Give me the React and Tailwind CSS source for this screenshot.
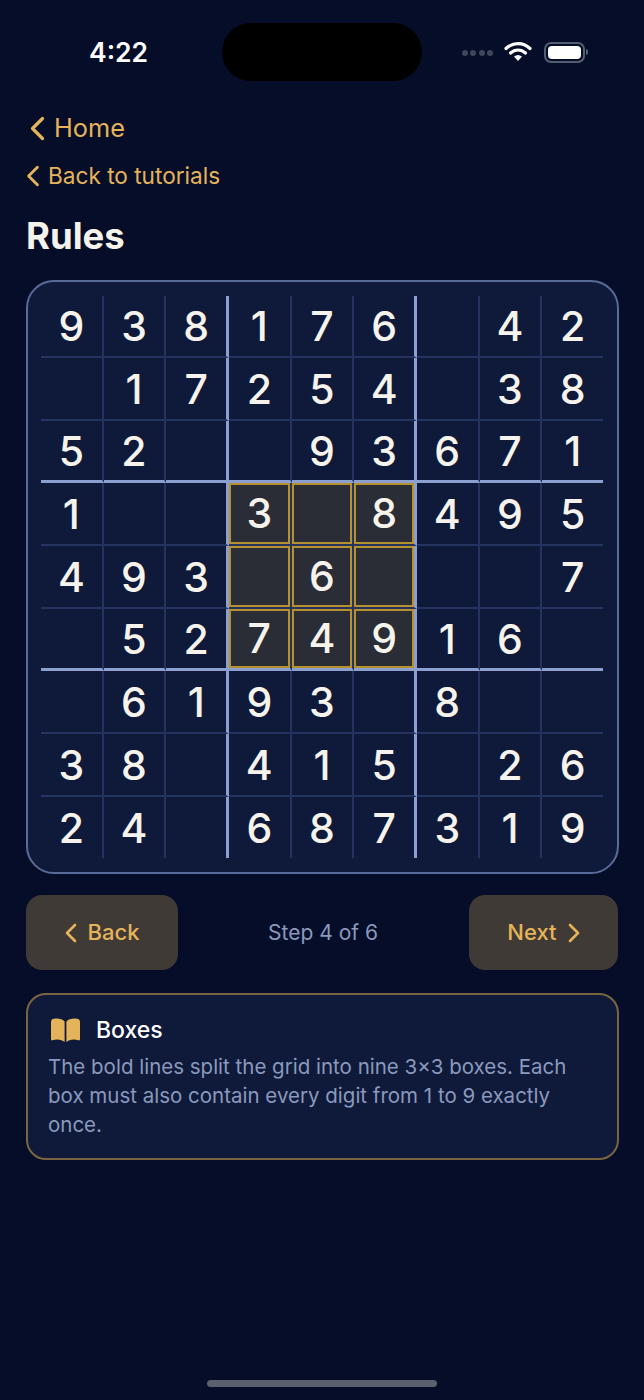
const board = [
  [9, 3, 8, 1, 7, 6, 0, 4, 2],
  [0, 1, 7, 2, 5, 4, 0, 3, 8],
  [5, 2, 0, 0, 9, 3, 6, 7, 1],
  [1, 0, 0, 3, 0, 8, 4, 9, 5],
  [4, 9, 3, 0, 6, 0, 0, 0, 7],
  [0, 5, 2, 7, 4, 9, 1, 6, 0],
  [0, 6, 1, 9, 3, 0, 8, 0, 0],
  [3, 8, 0, 4, 1, 5, 0, 2, 6],
  [2, 4, 0, 6, 8, 7, 3, 1, 9],
];

function Chevron({ left = true, className }) {
  return (
    <svg viewBox="0 0 12 20" fill="none" className={className}>
      <path
        d={left ? 'M10 2 2 10l8 8' : 'M2 2l8 8-8 8'}
        stroke="#e5b45a"
        strokeWidth="2.6"
        strokeLinecap="round"
        strokeLinejoin="round"
      />
    </svg>
  );
}

function BookIcon() {
  const page = 'M0 4Q0 1 3 .8C7 .2 11 .8 13.6 3.5V24C11 21.5 6 20.8 1.5 22.3.6 22.6 0 22 0 21Z';
  return (
    <svg width="29" height="24" viewBox="0 0 29 24" fill="#e5b45a">
      <path d={page} />
      <path d={page} transform="translate(29 0) scale(-1 1)" />
    </svg>
  );
}

function StatusBar() {
  return (
    <div className="flex h-[58px] items-center mt-[23px] pl-[89px] pr-[56px]">
      <span className="w-[133px] text-[26.5px] font-semibold text-white leading-none">4:22</span>
      <div className="w-[200px] h-[58px] rounded-[29px] bg-black" />
      <div className="ml-auto flex items-center">
        <div className="flex gap-[2.5px] mr-[13px] mt-[2px]">
          {[0, 1, 2, 3].map((i) => (
            <span key={i} className="w-[6px] h-[6px] rounded-full bg-[#3f4659]" />
          ))}
        </div>
        <svg width="28" height="20" viewBox="0 0 28 20" fill="none" className="mr-[12px] -mt-[3px] -ml-[2px]">
          <path d="M2 7.5C9 1 19 1 26 7.5" stroke="white" strokeWidth="3.2" strokeLinecap="round" />
          <path d="M6.5 12c4.5-4 10.5-4 15 0" stroke="white" strokeWidth="3.2" strokeLinecap="round" />
          <path d="M10 15.5c2.5-2 5.500-2 8 0L14 20z" fill="white" />
        </svg>
        <div className="relative w-[41px] h-[21px] rounded-[7px] border-2 border-[#555d70] p-[2px]">
          <div className="w-full h-full rounded-[4px] bg-white" />
        </div>
        <span className="ml-[1px] w-[2px] h-[6px] rounded-r-sm bg-[#555d70]" />
      </div>
    </div>
  );
}

function Cell({ value, row, col }) {
  const highlight = row >= 3 && row <= 5 && col >= 3 && col <= 5;
  const rightBold = col === 2 || col === 5;
  const bottomBold = row === 2 || row === 5;
  return (
    <div
      className={`flex items-center justify-center ${highlight ? '' : 'pt-[2px]'} ${
        col === 8 ? '' : rightBold ? 'border-r-[3px] border-r-[#8b9fd0]' : 'border-r-2 border-r-[#25345f]'
      } ${
        row === 8 ? '' : bottomBold ? 'border-b-[3px] border-b-[#8b9fd0]' : 'border-b-2 border-b-[#25345f]'
      }`}
    >
      {highlight ? (
        <div className="w-full h-full flex items-center justify-center bg-[#2a2c36] border-2 border-[#b8912f]">
          {value ? value : ''}
        </div>
      ) : value ? (
        value
      ) : (
        ''
      )}
    </div>
  );
}

export default function App() {
  return (
    <div className="flex flex-col h-[1400px] bg-[#050d29] font-['Inter',sans-serif]">
      <StatusBar />

      <div className="px-[26px]">
        <a className="flex items-center gap-[9px] mt-[32px] ml-[4px] text-[25.3px] leading-[30px] text-[#e5b45a]">
          <Chevron className="w-[15px] h-[25px]" />
          Home
        </a>
        <a className="flex items-center gap-[8px] mt-[19px] text-[22.6px] leading-[28px] text-[#e5b45a]">
          <Chevron className="w-[14px] h-[22px]" />
          Back to tutorials
        </a>
        <h1 className="mt-[25px] text-[36.5px] leading-[42px] font-bold text-[#f6f3ec]">Rules</h1>

        <div className="mt-[23px] w-[593px] h-[594px] pt-[13.5px] pl-[13px] rounded-[28px] border-2 border-[#5a6b97] bg-[#0f1a3a]">
          <div className="grid grid-cols-[repeat(8,62.67px)_61px] grid-rows-[repeat(8,62.67px)_61px] text-[41px] font-medium text-[#f6f3ec]">
            {board.flatMap((cells, row) =>
              cells.map((value, col) => <Cell key={`${row}-${col}`} value={value} row={row} col={col} />)
            )}
          </div>
        </div>

        <div className="flex items-center justify-between mt-[21px]">
          <button className="flex items-center justify-center gap-[11px] w-[152px] h-[75px] rounded-[16px] bg-[#403a36] text-[22px] font-medium text-[#e5b45a]">
            <Chevron className="w-[12px] h-[20px]" />
            Back
          </button>
          <span className="text-[21px] text-[#8a99bd] mr-[1px]">Step 4 of 6</span>
          <button className="flex items-center justify-center gap-[11px] w-[149px] h-[75px] rounded-[16px] bg-[#403a36] text-[22px] font-medium text-[#e5b45a]">
            Next
            <Chevron left={false} className="w-[12px] h-[20px]" />
          </button>
        </div>

        <div className="mt-[23px] w-[593px] h-[167px] rounded-[20px] border-2 border-[#7a6540] bg-[#0f1a3a] pt-[19px] pl-[20px] pr-[24px]">
          <div className="flex items-center gap-[16px] ml-[3px]">
            <BookIcon />
            <span className="text-[23px] leading-[32px] font-medium text-white">Boxes</span>
          </div>
          <p className="mt-[6px] text-[20.5px] leading-[29px] text-[#8a99bd]">
            The bold lines split the grid into nine 3×3 boxes. Each box must also contain every digit from 1 to 9 exactly once.
          </p>
        </div>
      </div>

      <div className="mt-auto mb-[13px] mx-auto w-[230px] h-[7px] rounded-full bg-[#5b606f]" />
    </div>
  );
}
